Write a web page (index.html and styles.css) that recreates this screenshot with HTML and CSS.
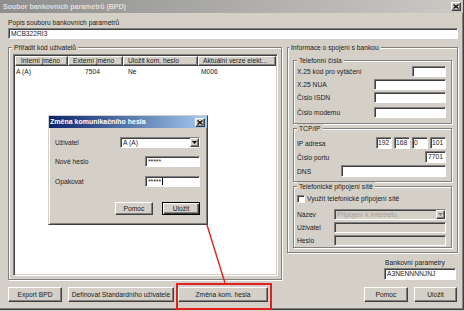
FILE: index.html
```html
<!DOCTYPE html>
<html>
<head>
<meta charset="utf-8">
<title>Soubor bankovních parametrů (BPD)</title>
<link rel="stylesheet" href="styles.css">
</head>
<body>
<div class="win">
  <div class="titlebar inactive">
    <span class="ttl">Soubor bankovních parametrů (BPD)</span>
    <span class="xbtn"><svg width="6" height="5" viewBox="0 0 6 5"><path d="M0.5 0.5L5.5 4.5M5.5 0.5L0.5 4.5" stroke="#000" stroke-width="1.2"/></svg></span>
  </div>
  <div class="client">
    <div class="lbl">Popis souboru bankovních parametrů</div>
    <div class="field wide">MCB322RI3</div>
    <div class="main">
      <fieldset class="grp leftgrp">
        <legend>Přiřadit kód uživatelů</legend>
        <div class="list">
          <div class="lhead">
            <span class="hc c1">Interní jméno</span>
            <span class="hc c2">Externí jméno</span>
            <span class="hc c3">Uložit kom. heslo</span>
            <span class="hc c4">Aktuální verze elekt...</span>
          </div>
          <div class="lrow">
            <span class="rc c1 p1">A (A)</span>
            <span class="rc c2 p2">7504</span>
            <span class="rc c3 p3">Ne</span>
            <span class="rc c4 p4">M006</span>
          </div>
        </div>
      </fieldset>
      <div class="rightcol">
        <fieldset class="grp info">
          <legend class="lg-out">Informace o spojení s bankou</legend>
          <fieldset class="grp inner tel">
            <legend>Telefonní čísla</legend>
            <div class="row h11"><span>X.25 kód pro vytáčení</span><span class="field w34"></span></div>
            <div class="row h11"><span>X.25 NUA</span><span class="field w72"></span></div>
            <div class="row h11"><span>Číslo ISDN</span><span class="field w72"></span></div>
            <div class="row h11 mt4"><span>Číslo modemu</span><span class="field w72"></span></div>
          </fieldset>
          <fieldset class="grp inner tcp">
            <legend>TCP/IP</legend>
            <div class="row h12"><span>IP adresa</span>
              <span class="ip"><span class="field ipb">192</span><span class="field ipb">168</span><span class="field ipb">0</span><span class="field ipb">101</span></span>
            </div>
            <div class="row h12"><span>Číslo portu</span><span class="field w21 ra">7701</span></div>
            <div class="row h12"><span>DNS</span><span class="field w105"></span></div>
          </fieldset>
          <fieldset class="grp inner dial">
            <legend>Telefonické připojení sítě</legend>
            <div class="chkrow"><span class="chk"></span><span>Využít telefonické připojení sítě</span></div>
            <div class="dialrows">
              <div class="row h11"><span>Název</span><span class="field dis w112 combo"><span class="ctext grey">Připojení k Internetu</span><span class="arrbtn"><svg width="5" height="3" viewBox="0 0 5 3"><path d="M0 0H5L2.5 3Z" fill="#808080"/></svg></span></span></div>
              <div class="row h11"><span>Uživatel</span><span class="field dis w112"></span></div>
              <div class="row h11"><span>Heslo</span><span class="field dis w112"></span></div>
            </div>
          </fieldset>
        </fieldset>
        <div class="bankp">
          <div class="lbl">Bankovní parametry</div>
          <div class="field">A3NENNNNJNJ</div>
        </div>
      </div>
    </div>
    <div class="btns">
      <span class="btn b-exp">Export BPD</span>
      <span class="btn b-def">Definovat Standardního uživatele</span>
      <span class="btn b-chg">Změna kom. hesla</span>
      <span class="spacer"></span>
      <span class="btn b-pom">Pomoc</span>
      <span class="btn b-ulo">Uložit</span>
    </div>
  </div>
</div>

<div class="dlg">
  <div class="titlebar active">
    <span class="ttl">Změna komunikačního hesla</span>
    <span class="xbtn"><svg width="6" height="5" viewBox="0 0 6 5"><path d="M0.5 0.5L5.5 4.5M5.5 0.5L0.5 4.5" stroke="#000" stroke-width="1.2"/></svg></span>
  </div>
  <div class="dbody">
    <div class="row h11"><span>Uživatel</span><span class="field w80 combo"><span class="ctext">A (A)</span><span class="arrbtn"><svg width="5" height="3" viewBox="0 0 5 3"><path d="M0 0H5L2.5 3Z" fill="#000"/></svg></span></span></div>
    <div class="row h11 dr2"><span>Nové heslo</span><span class="field w55">*****</span></div>
    <div class="row h11 dr3"><span>Opakovat</span><span class="field w55">*****<span class="caret"></span></span></div>
    <div class="dbtns">
      <span class="btn dbtn">Pomoc</span>
      <span class="btn dbtn def">Uložit</span>
    </div>
  </div>
</div>

<svg class="annot" width="464" height="311" viewBox="0 0 464 311">
  <line x1="207" y1="225" x2="225" y2="283" stroke="#e0221e" stroke-width="1.4"/>
  <rect x="177" y="284" width="94" height="25" fill="none" stroke="#e0221e" stroke-width="2"/>
</svg>
</body>
</html>
```
FILE: styles.css
```css
* { box-sizing: border-box; }
html, body { margin: 0; padding: 0; }
body {
  width: 464px;
  height: 311px;
  overflow: hidden;
  position: relative;
  background: #d4d0c8;
  font-family: "Liberation Sans", Arial, sans-serif;
  font-size: 6.7px;
  color: #1a1a1a;
}

.win {
  height: 310px;
  border-right: 1px solid #404040;
  border-bottom: 1px solid #404040;
  box-shadow: inset -1px -1px #808080;
  display: flex;
  flex-direction: column;
}

.titlebar {
  height: 13px;
  display: flex;
  align-items: center;
  justify-content: space-between;
  padding: 0 2px 0 3px;
  flex: none;
}
.titlebar.inactive {
  background: linear-gradient(to right, #8e8e8e, #cbc9c4);
  color: #e2dfda;
}
.titlebar.active {
  background: linear-gradient(to right, #0a246a, #a6caf0);
  color: #fff;
  height: 12px;
  padding: 0 2px 0 1px;
}
.ttl { font-weight: bold; font-size: 7px; line-height: 12px; white-space: nowrap; }

.xbtn {
  width: 10px;
  height: 9px;
  background: #d4d0c8;
  border: 1px solid;
  border-color: #fff #404040 #404040 #fff;
  box-shadow: inset -1px -1px #808080;
  display: flex;
  align-items: center;
  justify-content: center;
}

.client {
  padding: 5px 5px 0 8px;
  display: flex;
  flex-direction: column;
}

.lbl { height: 9px; line-height: 9px; white-space: nowrap; }

.field {
  height: 11px;
  background: #fff;
  border: 1px solid;
  border-color: #808080 #fff #fff #808080;
  box-shadow: inset 1px 1px #404040;
  padding: 0 2px;
  line-height: 9px;
  white-space: nowrap;
  overflow: hidden;
  display: block;
}
.field.wide { margin-top: 1px; }
.field.dis { background: #d4d0c8; }
.ra { text-align: right; }

.main {
  display: flex;
  gap: 5px;
  margin-top: 4px;
  height: 237px;
}

fieldset.grp {
  margin: 0;
  min-width: 0;
  border: 1px solid #808080;
  box-shadow: inset 1px 1px #fff, 1px 1px #fff;
}
fieldset.grp > legend {
  padding: 0 2px;
  line-height: 9px;
  height: 9px;
  background: #d4d0c8;
  white-space: nowrap;
}

.leftgrp {
  width: 274px;
  padding: 2px 3px 3px 4px;
  display: flex;
  flex-direction: column;
}
.leftgrp > legend { margin-left: -1px; }

.list {
  flex: 1;
  background: #fff;
  border: 1px solid;
  border-color: #808080 #fff #fff #808080;
  box-shadow: inset 1px 1px #404040, inset -1px -1px #d4d0c8;
  padding: 1px;
  overflow: hidden;
  height: 222px;
}
.lhead { display: flex; height: 10px; }
.hc {
  height: 10px;
  line-height: 8px;
  background: #d4d0c8;
  border: 1px solid;
  border-color: #fff #404040 #404040 #fff;
  box-shadow: inset -1px -1px #808080;
  white-space: nowrap;
  overflow: hidden;
  padding-left: 4px;
}
.c1 { width: 53px; }
.hc.c1 { padding-left: 5px; }
.c2 { width: 55px; }
.c3 { width: 75px; }
.c4 { flex: 1; }
.lrow { display: flex; height: 10px; line-height: 10px; margin-top: 1px; }
.rc { white-space: nowrap; }
.p1 { padding-left: 1px; }
.p2 { padding-left: 17px; }
.p3 { padding-left: 5px; }
.p4 { padding-left: 3px; }

.rightcol {
  width: 171px;
  display: flex;
  flex-direction: column;
}
.info {
  height: 210px;
  padding: 4px 5px 2px 5px;
  flex: none;
}
.info > legend.lg-out { margin-left: -4px; }

.inner { padding: 1px 5px 5px 3px; }
.inner > legend { margin-left: 0; }
.tel { display: flex; flex-direction: column; gap: 2px; }
.tel > .mt4 { margin-top: 2px; }
.tcp { margin-top: 2px; padding: 4px 5px 4px 3px; display: flex; flex-direction: column; gap: 2px; }
.dial { padding: 2px 5px 1px 3px; }

.row {
  display: flex;
  align-items: center;
  justify-content: space-between;
  white-space: nowrap;
}
.h11 { height: 11px; }
.h12 { height: 12px; }
.h12 .field { height: 12px; line-height: 10px; }

.w34 { width: 34px; }
.w72 { width: 72px; }
.w21 { width: 21px; }
.w105 { width: 105px; }
.w112 { width: 112px; }
.w80 { width: 80px; }
.w55 { width: 55px; }

.ip { display: flex; gap: 2px; }
.ipb { width: 16px; padding: 0 1px; }

.chkrow { display: flex; align-items: center; gap: 2px; height: 11px; }
.chk {
  width: 8px;
  height: 8px;
  background: #fff;
  border: 1px solid;
  border-color: #808080 #fff #fff #808080;
  box-shadow: inset 1px 1px #404040;
}
.dialrows { margin-top: 5px; display: flex; flex-direction: column; gap: 2px; }

.combo { display: flex; align-items: center; padding: 0 0 0 2px; }
.ctext { flex: 1; overflow: hidden; }
.grey { color: #a09d97; }
.arrbtn {
  width: 9px;
  height: 9px;
  background: #d4d0c8;
  border: 1px solid;
  border-color: #fff #404040 #404040 #fff;
  box-shadow: inset -1px -1px #808080;
  display: flex;
  align-items: center;
  justify-content: center;
  flex: none;
}

.bankp {
  align-self: flex-end;
  width: 72px;
  margin-top: 5px;
  margin-right: 2px;
}
.bankp .lbl { padding-left: 1px; }
.bankp .field { height: 12px; line-height: 10px; margin-top: 1px; }

.btns {
  display: flex;
  margin-top: 7px;
  height: 15px;
  padding-right: 1px;
}
.btn {
  display: flex;
  align-items: center;
  justify-content: center;
  height: 15px;
  background: #d4d0c8;
  border: 1px solid;
  border-color: #fff #404040 #404040 #fff;
  box-shadow: inset -1px -1px #808080;
  white-space: nowrap;
}
.b-exp { width: 54px; }
.b-def { width: 106px; margin-left: 6px; }
.b-chg { width: 90px; margin-left: 4px; }
.spacer { flex: 1; }
.b-pom { width: 44px; }
.b-ulo { width: 43px; margin-left: 6px; }

.dlg {
  position: absolute;
  left: 48px;
  top: 115px;
  width: 160px;
  height: 110px;
  background: #d4d0c8;
  border: 1px solid;
  border-color: #d4d0c8 #404040 #404040 #d4d0c8;
  box-shadow: inset 1px 1px #fff, inset -1px -1px #808080;
  z-index: 2;
}
.dbody {
  padding: 9px 7px 0 6px;
  display: flex;
  flex-direction: column;
}
.dr2 { margin-top: 8px; }
.dr3 { margin-top: 9px; }
.caret {
  display: inline-block;
  width: 1px;
  height: 7px;
  background: #000;
  vertical-align: -1px;
  margin-left: 1px;
}
.dbtns {
  display: flex;
  justify-content: flex-end;
  gap: 9px;
  margin-top: 15px;
}
.dbtn { width: 38px; height: 13px; }
.dbtn.def {
  border-color: #000;
  box-shadow: inset 1px 1px #fff, inset -1px -1px #404040, inset -2px -2px #808080;
}

.annot {
  position: absolute;
  left: 0;
  top: 0;
  z-index: 3;
  pointer-events: none;
}
```
